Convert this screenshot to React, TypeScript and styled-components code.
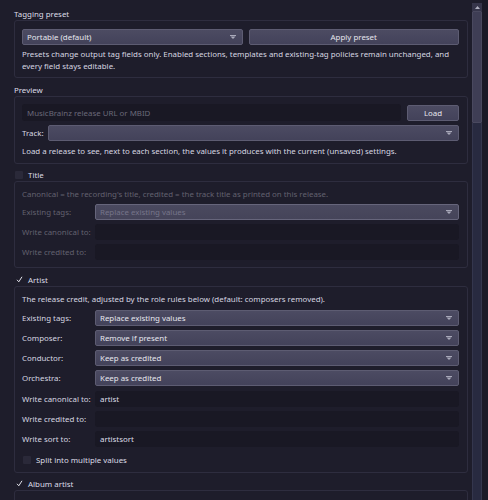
import React from "react";
import styled, { createGlobalStyle, css } from "styled-components";

const GlobalStyle = createGlobalStyle`
  html, body { margin: 0; padding: 0; }
  body {
    background: #1e1d2b;
    font-family: "Noto Sans", "DejaVu Sans", sans-serif;
    font-size: 7.9px;
    color: #dcdce6;
  }
  * { box-sizing: border-box; }
`;

const Window = styled.div`
  display: flex;
  height: 500px;
  overflow: hidden;
  background: #1e1d2b;
`;

const Content = styled.div`
  flex: 1;
  display: flex;
  flex-direction: column;
  padding: 9px 4px 0 14px;
  min-width: 0;
`;

const Section = styled.div<{ $gap: number }>`
  display: flex;
  flex-direction: column;
  margin-top: ${(p) => p.$gap}px;
  flex-shrink: 0;
`;

const GroupTitle = styled.div`
  height: 11px;
  line-height: 11px;
  color: #dcdce6;
  white-space: nowrap;
`;

const CheckTitle = styled.div<{ $mt?: number }>`
  height: 13px;
  display: flex;
  align-items: center;
  gap: 5px;
  padding-left: 1px;
  margin-top: ${(p) => p.$mt ?? 0}px;
  white-space: nowrap;
`;

const CheckBox = styled.span<{ $checked?: boolean }>`
  width: 8px;
  height: 8px;
  display: inline-flex;
  align-items: center;
  justify-content: center;
  background: ${(p) => (p.$checked ? "transparent" : "#2a2939")};
  border-radius: 1px;
  flex-shrink: 0;
`;

const GroupBox = styled.div<{ $pt: number; $pb: number; $minH?: number }>`
  border: 1px solid #2e2d3f;
  border-radius: 3px;
  padding: ${(p) => p.$pt}px 8px ${(p) => p.$pb}px 7px;
  display: flex;
  flex-direction: column;
  min-height: ${(p) => p.$minH ?? 0}px;
`;

const Row = styled.div<{ $mt?: number }>`
  display: flex;
  align-items: center;
  gap: 6px;
  margin-top: ${(p) => p.$mt ?? 0}px;
`;

const FormRow = styled.div<{ $mt?: number }>`
  display: flex;
  align-items: center;
  margin-top: ${(p) => p.$mt ?? 0}px;
`;

const FieldLabel = styled.div<{ $w?: number; $disabled?: boolean }>`
  width: ${(p) => p.$w ?? 73}px;
  flex-shrink: 0;
  white-space: nowrap;
  color: ${(p) => (p.$disabled ? "#62616f" : "#d6d6e0")};
`;

const Note = styled.div<{ $mt?: number; $disabled?: boolean }>`
  line-height: 12px;
  margin-top: ${(p) => p.$mt ?? 0}px;
  color: ${(p) => (p.$disabled ? "#62616f" : "#d6d6e0")};
`;

const raised = css`
  height: 16px;
  border: 1px solid #5d5c72;
  border-radius: 2px;
  background: linear-gradient(#4c4b62, #43425a);
`;

const ComboBox = styled.div<{ $disabled?: boolean }>`
  ${raised}
  flex: 1;
  min-width: 0;
  display: flex;
  align-items: center;
  justify-content: space-between;
  padding: 0 6px 0 4px;
  color: ${(p) => (p.$disabled ? "#76758a" : "#e6e6ee")};
  ${(p) =>
    p.$disabled &&
    css`
      border-color: #66657b;
      background: linear-gradient(#4a495f, #454459);
    `}
`;

const Button = styled.div<{ $w?: number }>`
  ${raised}
  ${(p) => (p.$w ? `width: ${p.$w}px;` : "flex: 1;")}
  display: flex;
  align-items: center;
  justify-content: center;
  color: #e6e6ee;
  flex-shrink: 0;
`;

const LineEdit = styled.div<{ $h?: number; $placeholder?: boolean }>`
  flex: 1;
  min-width: 0;
  height: ${(p) => p.$h ?? 16}px;
  background: #191824;
  border-radius: 3px;
  display: flex;
  align-items: center;
  padding: 0 5px;
  color: ${(p) => (p.$placeholder ? "#6a6979" : "#dedee8")};
`;

const ScrollBar = styled.div`
  width: 10px;
  margin-top: 3px;
  display: flex;
  flex-direction: column;
  flex-shrink: 0;
`;

const ScrollArrow = styled.div`
  height: 8px;
  display: flex;
  align-items: center;
  justify-content: center;
  background: #36354a;
`;

const ScrollHandle = styled.div`
  height: 112px;
  background: #3f3e55;
  border: 1px solid #4a495f;
  border-radius: 1px;
`;

const ScrollTrack = styled.div`
  flex: 1;
  background: #282a40;
  border-left: 1px solid #34364d;
  border-right: 1px solid #34364d;
`;

const RightStrip = styled.div`
  width: 6px;
  flex-shrink: 0;
  background: #1b1a27;
`;

const Arrow = () => (
  <svg width="6" height="4" viewBox="0 0 6 4">
    <rect x="0" y="0" width="6" height="1" fill="#a9a9ba" />
    <path d="M0.5 1.5 H5.5 L3 4 Z" fill="#a9a9ba" />
  </svg>
);

const Check = () => (
  <svg width="7" height="7" viewBox="0 0 7 7">
    <path d="M1 3.8 L2.8 5.8 L6 0.8" stroke="#e2e2ea" strokeWidth="1" fill="none" />
  </svg>
);

const Combo = ({ text, disabled }: { text?: string; disabled?: boolean }) => (
  <ComboBox $disabled={disabled}>
    <span>{text}</span>
    <Arrow />
  </ComboBox>
);

const Field = ({
  label,
  children,
  mt,
  disabled,
}: {
  label: string;
  children: React.ReactNode;
  mt?: number;
  disabled?: boolean;
}) => (
  <FormRow $mt={mt}>
    <FieldLabel $disabled={disabled}>{label}</FieldLabel>
    {children}
  </FormRow>
);

export default function App() {
  return (
    <>
      <GlobalStyle />
      <Window>
        <Content>
          <Section $gap={0}>
            <GroupTitle>Tagging preset</GroupTitle>
            <GroupBox $pt={8} $pb={5}>
              <Row>
                <Combo text="Portable (default)" />
                <Button>Apply preset</Button>
              </Row>
              <Note $mt={3}>
                Presets change output tag fields only. Enabled sections, templates and existing-tag policies remain unchanged, and
                every field stays editable.
              </Note>
            </GroupBox>
          </Section>

          <Section $gap={7}>
            <GroupTitle>Preview</GroupTitle>
            <GroupBox $pt={7} $pb={6}>
              <Row>
                <LineEdit $h={17} $placeholder>
                  MusicBrainz release URL or MBID
                </LineEdit>
                <Button $w={52}>Load</Button>
              </Row>
              <FormRow $mt={4}>
                <FieldLabel $w={26}>Track:</FieldLabel>
                <Combo />
              </FormRow>
              <Note $mt={4}>
                Load a release to see, next to each section, the values it produces with the current (unsaved) settings.
              </Note>
            </GroupBox>
          </Section>

          <Section $gap={4}>
            <CheckTitle>
              <CheckBox />
              <span>Title</span>
            </CheckTitle>
            <GroupBox $pt={6} $pb={7}>
              <Note $disabled>
                Canonical = the recording's title, credited = the track title as printed on this release.
              </Note>
              <Field label="Existing tags:" mt={4} disabled>
                <Combo text="Replace existing values" disabled />
              </Field>
              <Field label="Write canonical to:" mt={4} disabled>
                <LineEdit />
              </Field>
              <Field label="Write credited to:" mt={4} disabled>
                <LineEdit />
              </Field>
            </GroupBox>
          </Section>

          <Section $gap={5}>
            <CheckTitle>
              <CheckBox $checked>
                <Check />
              </CheckBox>
              <span>Artist</span>
            </CheckTitle>
            <GroupBox $pt={6} $pb={6}>
              <Note>The release credit, adjusted by the role rules below (default: composers removed).</Note>
              <Field label="Existing tags:" mt={5}>
                <Combo text="Replace existing values" />
              </Field>
              <Field label="Composer:" mt={4}>
                <Combo text="Remove if present" />
              </Field>
              <Field label="Conductor:" mt={4}>
                <Combo text="Keep as credited" />
              </Field>
              <Field label="Orchestra:" mt={4}>
                <Combo text="Keep as credited" />
              </Field>
              <Field label="Write canonical to:" mt={5}>
                <LineEdit>artist</LineEdit>
              </Field>
              <Field label="Write credited to:" mt={4}>
                <LineEdit />
              </Field>
              <Field label="Write sort to:" mt={4}>
                <LineEdit>artistsort</LineEdit>
              </Field>
              <CheckTitle $mt={6}>
                <CheckBox />
                <span>Split into multiple values</span>
              </CheckTitle>
            </GroupBox>
          </Section>

          <Section $gap={4}>
            <CheckTitle>
              <CheckBox $checked>
                <Check />
              </CheckBox>
              <span>Album artist</span>
            </CheckTitle>
            <GroupBox $pt={6} $pb={6} $minH={60} />
          </Section>
        </Content>
        <ScrollBar>
          <ScrollArrow>
            <svg width="5" height="3" viewBox="0 0 5 3">
              <path d="M0 3 L2.5 0 L5 3 Z" fill="#b0b0c0" />
            </svg>
          </ScrollArrow>
          <ScrollHandle />
          <ScrollTrack />
        </ScrollBar>
        <RightStrip />
      </Window>
    </>
  );
}
